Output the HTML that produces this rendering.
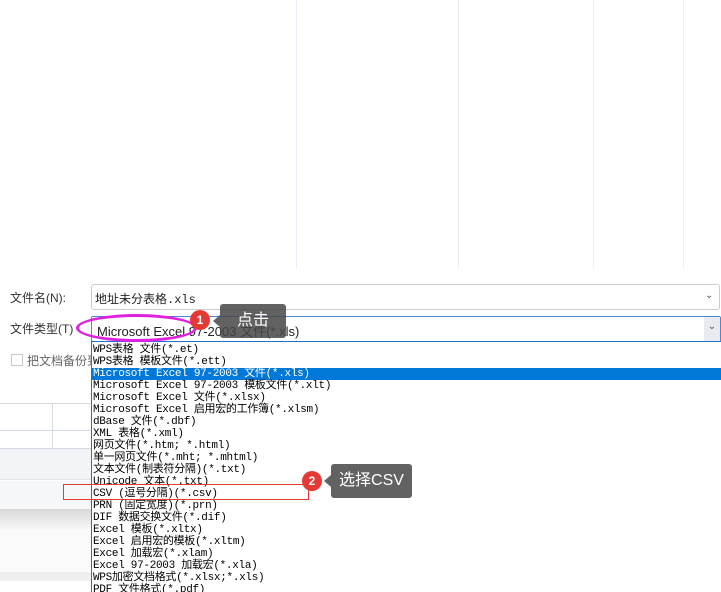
<!DOCTYPE html>
<html style="width:721px;height:592px;overflow:hidden"><head><meta charset="utf-8"><style>
*{margin:0;padding:0;box-sizing:border-box}
body{width:721px;height:592px;overflow:hidden;background:#fff;position:relative;font-family:"Liberation Sans","Noto Sans CJK SC",sans-serif;}
.a{position:absolute}
.vl{position:absolute;top:0;height:268px;width:1px;background:#e6eefa}
.list{position:absolute;left:91px;top:341px;width:630px;height:251px;overflow:hidden;border:1px solid #1a73d0;border-right:none;border-bottom:none;background:#fff;font-family:"Liberation Mono","Noto Sans CJK SC",monospace;font-size:11px;line-height:12px;color:#000;padding-top:2px}
.list div{padding-left:1px;height:12px;white-space:nowrap;letter-spacing:-0.3px}
.sel{background:#0078d7;color:#fff}
.tip{position:absolute;background:rgba(70,70,70,0.85);color:#fff;font-size:16px;border-radius:3px;text-align:center}
.tip:before{content:"";position:absolute;left:-7px;top:11px;border-right:7px solid rgba(70,70,70,0.85);border-top:6px solid transparent;border-bottom:6px solid transparent}
.dot{position:absolute;width:20px;height:20px;border-radius:50%;background:#e53935;color:#fff;font-size:12px;font-weight:bold;text-align:center;line-height:20px}
</style></head><body>
<div class="vl" style="left:296px"></div><div class="vl" style="left:458px"></div><div class="vl" style="left:593px"></div><div class="vl" style="left:683px"></div>
<div class="a" style="left:0;top:403px;width:91px;height:46px;background:#fff;border-top:1px solid #d5d9e0"></div>
<div class="a" style="left:0;top:430px;width:91px;height:1px;background:#d5dbe6"></div>
<div class="a" style="left:0;top:448px;width:91px;height:1px;background:#d5dbe6"></div>
<div class="a" style="left:52px;top:403px;width:1px;height:46px;background:#d5dbe6"></div>
<div class="a" style="left:0;top:449px;width:91px;height:31px;background:#f3f4f7;border-bottom:1px solid #e2e4e8"></div>
<div class="a" style="left:0;top:481px;width:91px;height:28px;background:#f6f7f9"></div>
<div class="a" style="left:0;top:509px;width:91px;height:20px;background:linear-gradient(#d8d8d8,#f7f7f7)"></div>
<div class="a" style="left:0;top:529px;width:91px;height:43px;background:#fafafa"></div>
<div class="a" style="left:0;top:572px;width:91px;height:9px;background:#efefef"></div>
<div class="a" style="left:0;top:270px;width:91px;height:133px;background:#fff"></div>
<div class="a" style="left:10px;top:289px;font-size:12px;color:#333">文件名(N):</div>
<div class="a" style="left:10px;top:320px;font-size:12px;color:#333">文件类型(T)</div>
<div class="a" style="left:11px;top:354px;width:12px;height:12px;border:1px solid #c8c8c8;background:#fff"></div>
<div class="a" style="left:27px;top:352px;font-size:12px;color:#666;white-space:nowrap;width:64px;overflow:hidden">把文档备份到</div>
<div class="a" style="left:91px;top:284px;width:629px;height:26px;border:1px solid #ccc;border-radius:3px;background:#fff;font-size:12px;padding:5px 3px;color:#222;font-family:'Liberation Mono','Noto Sans CJK SC',monospace">地址未分表格.xls</div>
<div class="a" style="left:705px;top:290px;font-size:10px;color:#556">&#8964;</div>
<div class="a" style="left:91px;top:316px;width:630px;height:26px;border:1px solid #4a86d8;border-radius:2px;background:#fff;font-size:13px;padding:4px 5px;color:#222">Microsoft Excel 97-2003 文件(*.xls)</div>
<div class="a" style="left:704px;top:317px;width:16px;height:24px;background:#e8eaef;font-size:10px;color:#556;text-align:center;line-height:20px">&#8964;</div>
<div class="list">
<div>WPS表格 文件(*.et)</div>
<div>WPS表格 模板文件(*.ett)</div>
<div class="sel">Microsoft Excel 97-2003 文件(*.xls)</div>
<div>Microsoft Excel 97-2003 模板文件(*.xlt)</div>
<div>Microsoft Excel 文件(*.xlsx)</div>
<div>Microsoft Excel 启用宏的工作簿(*.xlsm)</div>
<div>dBase 文件(*.dbf)</div>
<div>XML 表格(*.xml)</div>
<div>网页文件(*.htm; *.html)</div>
<div>单一网页文件(*.mht; *.mhtml)</div>
<div>文本文件(制表符分隔)(*.txt)</div>
<div>Unicode 文本(*.txt)</div>
<div>CSV (逗号分隔)(*.csv)</div>
<div>PRN (固定宽度)(*.prn)</div>
<div>DIF 数据交换文件(*.dif)</div>
<div>Excel 模板(*.xltx)</div>
<div>Excel 启用宏的模板(*.xltm)</div>
<div>Excel 加载宏(*.xlam)</div>
<div>Excel 97-2003 加载宏(*.xla)</div>
<div>WPS加密文档格式(*.xlsx;*.xls)</div>
<div>PDF 文件格式(*.pdf)</div>
</div>
<div class="a" style="left:76px;top:314px;width:121px;height:28px;border:3px solid #e020e0;border-radius:50%"></div>
<div class="a" style="left:63px;top:484px;width:246px;height:16px;border:1px solid #e53935"></div>
<div class="dot" style="left:190px;top:310px">1</div>
<div class="tip" style="left:220px;top:304px;width:66px;height:34px;line-height:34px">点击</div>
<div class="dot" style="left:302px;top:471px">2</div>
<div class="tip" style="left:331px;top:464px;width:81px;height:34px;line-height:34px">选择CSV</div>
</body></html>
